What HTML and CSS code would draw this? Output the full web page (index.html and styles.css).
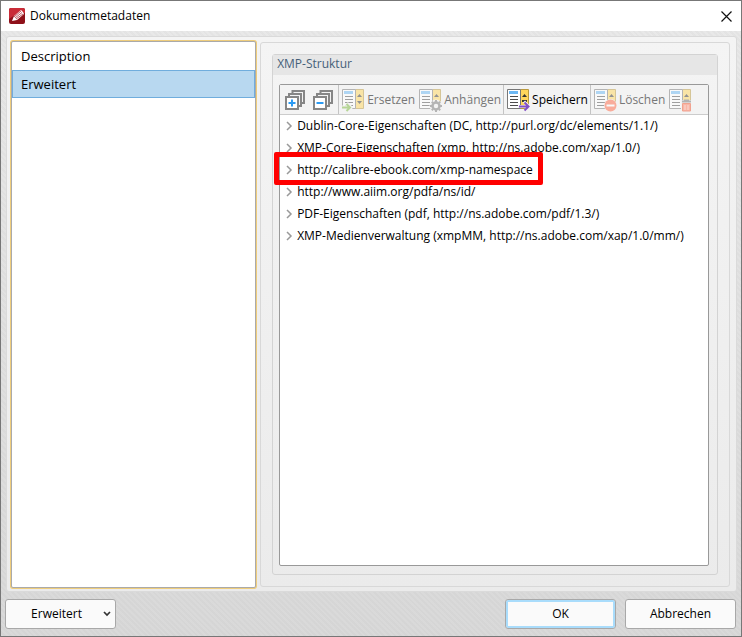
FILE: index.html
```html
<!DOCTYPE html>
<html lang="de">
<head>
<meta charset="utf-8">
<title>Dokumentmetadaten</title>
<link rel="stylesheet" href="styles.css">
</head>
<body>
<svg class="defs" aria-hidden="true">
  <symbol id="doc" viewBox="0 0 24 24">
    <path d="M14.500 1.500H22.500V20.500H14.500Z" fill="#ffd65c" stroke="#b9993d"/>
    <path d="M1.500 1.500H14.500V20.500H1.500Z" fill="#fff" stroke="#777"/>
    <path d="M3 3H12V6H3Z" fill="#6cb8f4"/>
    <path d="M4 8.500H12M4 11.500H12M4 14.500H12M4 17.500H12" stroke="#4d4d4d"/>
    <path d="M16 9L18.500 6L21 9Z" fill="#333"/>
  </symbol>
  <symbol id="stack" viewBox="0 0 22 22">
    <path d="M8.500 5V2H20V14H17M5 8V5H17V17H14" fill="none" stroke="#868686" stroke-width="2"/>
    <path d="M2 8H14V20H2Z" fill="#fff" stroke="#868686" stroke-width="2"/>
  </symbol>
  <symbol id="chevron" viewBox="0 0 8 10">
    <path d="M2 1L6 5L2 9" fill="none" stroke="#999" stroke-width="1.500"/>
  </symbol>
</svg>
<main class="window">
  <header class="titlebar">
    <svg class="logo" viewBox="0 0 16 16" aria-hidden="true">
      <rect width="16" height="16" rx="2" fill="#8e1019"/>
      <path d="M0 2Q0 0 2 0H14Q16 0 16 2V5Q7 5 0 11Z" fill="#c92b37"/>
      <path d="M3 13L5 8L12 2L14 4L15 6L8 12Z" fill="#fff"/>
      <path d="M5 9L12 3M6 10L13 4.500M7 11L14 6" stroke="#a51420" stroke-width=".7"/>
    </svg>
    <h1>Dokumentmetadaten</h1>
    <button class="close" aria-label="Schließen"><svg viewBox="0 0 11 11"><path d="M.5 .5L10.500 10.500M10.500 .5L.5 10.500" stroke="#111" stroke-width="1.200"/></svg></button>
  </header>
  <div class="panel">
    <nav class="pages">
      <button>Description</button>
      <button class="selected" aria-current="page">Erweitert</button>
    </nav>
    <div class="page">
      <section class="group">
        <h2>XMP-Struktur</h2>
        <div class="viewer">
          <div class="toolbar">
            <div class="tools stacks">
              <button aria-label="Alle erweitern"><svg><use href="#stack"/><path d="M8 10.500V17.500M4.500 14H11.500" stroke="#2b9bf4" stroke-width="2"/></svg></button>
              <button aria-label="Alle reduzieren"><svg><use href="#stack"/><path d="M4.500 14H11.500" stroke="#2b9bf4" stroke-width="2"/></svg></button>
            </div>
            <div class="tools">
              <button disabled><svg><use href="#doc"/><path d="M16 13L18.500 16L21 13Z" fill="#333"/><path d="M0 19.500H9M5.500 15.500L9.500 19.500L5.500 23.500" fill="none" stroke="#f3f3f3" stroke-width="4"/><path d="M1 19.500H9M5.500 16L9 19.500L5.500 23" fill="none" stroke="#7ab83d" stroke-width="2"/></svg>Ersetzen</button>
              <button disabled><svg><use href="#doc"/><circle cx="18" cy="18" r="6.500" fill="#f3f3f3"/><circle cx="18" cy="18" r="3.500" fill="none" stroke="#777" stroke-width="2.500"/><path d="M18 12V14M18 22V24M12 18H14M22 18H24M13.800 13.800L15 15M21 21L22.200 22.200M13.800 22.200L15 21M21 15L22.200 13.800" stroke="#777" stroke-width="2"/></svg>Anhängen</button>
            </div>
            <div class="tools">
              <button><svg><use href="#doc"/><path d="M16 13H21" stroke="#333" stroke-width="2"/><path d="M12 18.500H22M18 13.500L23 18.500L18 23.500" fill="none" stroke="#f3f3f3" stroke-width="3"/><path d="M13 18.500H22M18.500 14.500L22.500 18.500L18.500 22.500" fill="none" stroke="#8250c4" stroke-width="2"/></svg>Speichern</button>
            </div>
            <div class="tools">
              <button disabled><svg><use href="#doc"/><circle cx="17.500" cy="17.500" r="6.500" fill="#f3f3f3"/><circle cx="17.500" cy="17.500" r="6" fill="#ff6845"/><path d="M13.500 17.500H21.500" stroke="#fff" stroke-width="2"/></svg>Löschen</button>
              <button disabled aria-label="Alle löschen"><svg><use href="#doc"/><path d="M13 12H24V24H13Z" fill="#f3f3f3"/><path d="M14 13.500H23M17 13V12.500H20V13" fill="none" stroke="#777" stroke-width="2"/><path d="M14.500 15.500H22.500V23H14.500Z" fill="#ff7b5c" stroke="#f0532e"/><path d="M17 17V22M20 17V22" stroke="#ffc3b5"/></svg></button>
            </div>
          </div>
          <ul class="tree">
            <li><button><svg><use href="#chevron"/></svg>Dublin-Core-Eigenschaften (DC, http://purl.org/dc/elements/1.1/)</button></li>
            <li><button><svg><use href="#chevron"/></svg>XMP-Core-Eigenschaften (xmp, http://ns.adobe.com/xap/1.0/)</button></li>
            <li class="marked"><button><svg><use href="#chevron"/></svg>http://calibre-ebook.com/xmp-namespace</button></li>
            <li><button><svg><use href="#chevron"/></svg>http://www.aiim.org/pdfa/ns/id/</button></li>
            <li><button><svg><use href="#chevron"/></svg>PDF-Eigenschaften (pdf, http://ns.adobe.com/pdf/1.3/)</button></li>
            <li><button><svg><use href="#chevron"/></svg>XMP-Medienverwaltung (xmpMM, http://ns.adobe.com/xap/1.0/mm/)</button></li>
          </ul>
        </div>
      </section>
    </div>
  </div>
  <footer class="actions">
    <button class="action more"><span>Erweitert</span><svg viewBox="0 0 8 6" aria-hidden="true"><path d="M1 1L4 4L7 1" fill="none" stroke="#333" stroke-width="1.700"/></svg></button>
    <button class="action default">OK</button>
    <button class="action">Abbrechen</button>
  </footer>
</main>
</body>
</html>
```
FILE: styles.css
```css
* { box-sizing: border-box; }
body {
  margin: 0;
  color: #000;
  font: 12px/16px "Open Sans", "Noto Sans", sans-serif;
}
button {
  margin: 0;
  padding: 0;
  border: 0;
  background: none;
  color: inherit;
  font: inherit;
}
svg { display: block; flex: none; }
.defs { position: absolute; width: 0; height: 0; }
.window {
  display: flex;
  flex-direction: column;
  min-height: 100vh;
  border: 1px solid #777;
  background:
    repeating-linear-gradient(45deg, #0000 0 2px, #00000005 2px 4px),
    linear-gradient(#e9e9e9, #d9d9d9);
}
.titlebar {
  display: flex;
  align-items: center;
  gap: 5px;
  height: 30px;
  padding: 0 9px 0 8px;
  background: #fff;
}
.logo { width: 16px; height: 16px; }
h1 { flex: 1; margin: 0; font-size: 12px; font-weight: 400; }
.close svg { width: 11px; height: 11px; }
.panel {
  flex: 1;
  display: flex;
  gap: 5px;
  margin: 5px 4px 0 5px;
  padding: 4px 4px 3px;
  border: 1px solid #dadada;
  border-radius: 3px;
  background: linear-gradient(#f4f4f4, #ebebeb);
}
.pages {
  flex: 0 0 34%;
  margin-right: -1px;
  border: 1px solid #aaa;
  border-radius: 2px;
  background: #fff;
  box-shadow: 0 0 0 1px #efcd7c;
}
.pages button {
  display: block;
  width: 100%;
  height: 28px;
  padding: 0 8px;
  border: 1px solid transparent;
  font-size: 13px;
  text-align: left;
}
.pages .selected { border-color: #70addd; background: #b8d8f0; }
.page {
  flex: 1;
  display: flex;
  margin: 1px 2px 1px 0;
  padding: 11px;
  border: 1px solid #d8d8d8;
  border-radius: 3px;
}
.group {
  flex: 1;
  display: flex;
  flex-direction: column;
  border: 1px solid #d3d3d3;
  border-radius: 3px;
}
h2 {
  height: 20px;
  margin: 0;
  padding: 1px 4px;
  background: #e6e6e6;
  color: #456079;
  font-size: 12px;
  font-weight: 400;
}
.viewer {
  flex: 1;
  margin: 9px 8px 8px 6px;
  border: 1px solid #999;
  border-radius: 2px;
  background: #fff;
}
.toolbar {
  display: flex;
  height: 30px;
  border-bottom: 1px solid #ccc;
  background: #f3f3f3;
}
.tools { display: flex; gap: 3px; padding: 0 2px; }
.tools + .tools { border-left: 1px solid #c4c4c4; }
.tools button { display: flex; align-items: center; gap: 2px; }
.tools svg { width: 24px; height: 24px; }
.tools button:disabled { color: #777; }
.tools button:disabled svg { opacity: .5; }
.stacks { gap: 6px; padding: 0 4px; }
.stacks svg { width: 22px; height: 22px; }
.tree { margin: 0; padding: 0; list-style: none; }
.tree li { position: relative; width: max-content; }
.tree button {
  display: flex;
  align-items: center;
  gap: 4px;
  height: 22px;
  padding: 0 10px 0 5px;
}
.tree svg { width: 8px; height: 10px; }
.marked::after {
  content: "";
  position: absolute;
  inset: -7px 0 -4px -6px;
  border: 5px solid #ff0000;
  border-radius: 2px;
  pointer-events: none;
}
.actions { display: flex; gap: 9px; padding: 7px 5px 7px 4px; }
.action {
  width: 111px;
  height: 30px;
  border: 1px solid #a8a8a8;
  border-radius: 3px;
  background: #fafafa;
}
.more { display: flex; align-items: center; margin-right: auto; padding: 0 4px; }
.more span { flex: 1; }
.more svg { width: 8px; height: 6px; }
.default { box-shadow: inset 0 0 0 2px #a9dcfb; }
```
